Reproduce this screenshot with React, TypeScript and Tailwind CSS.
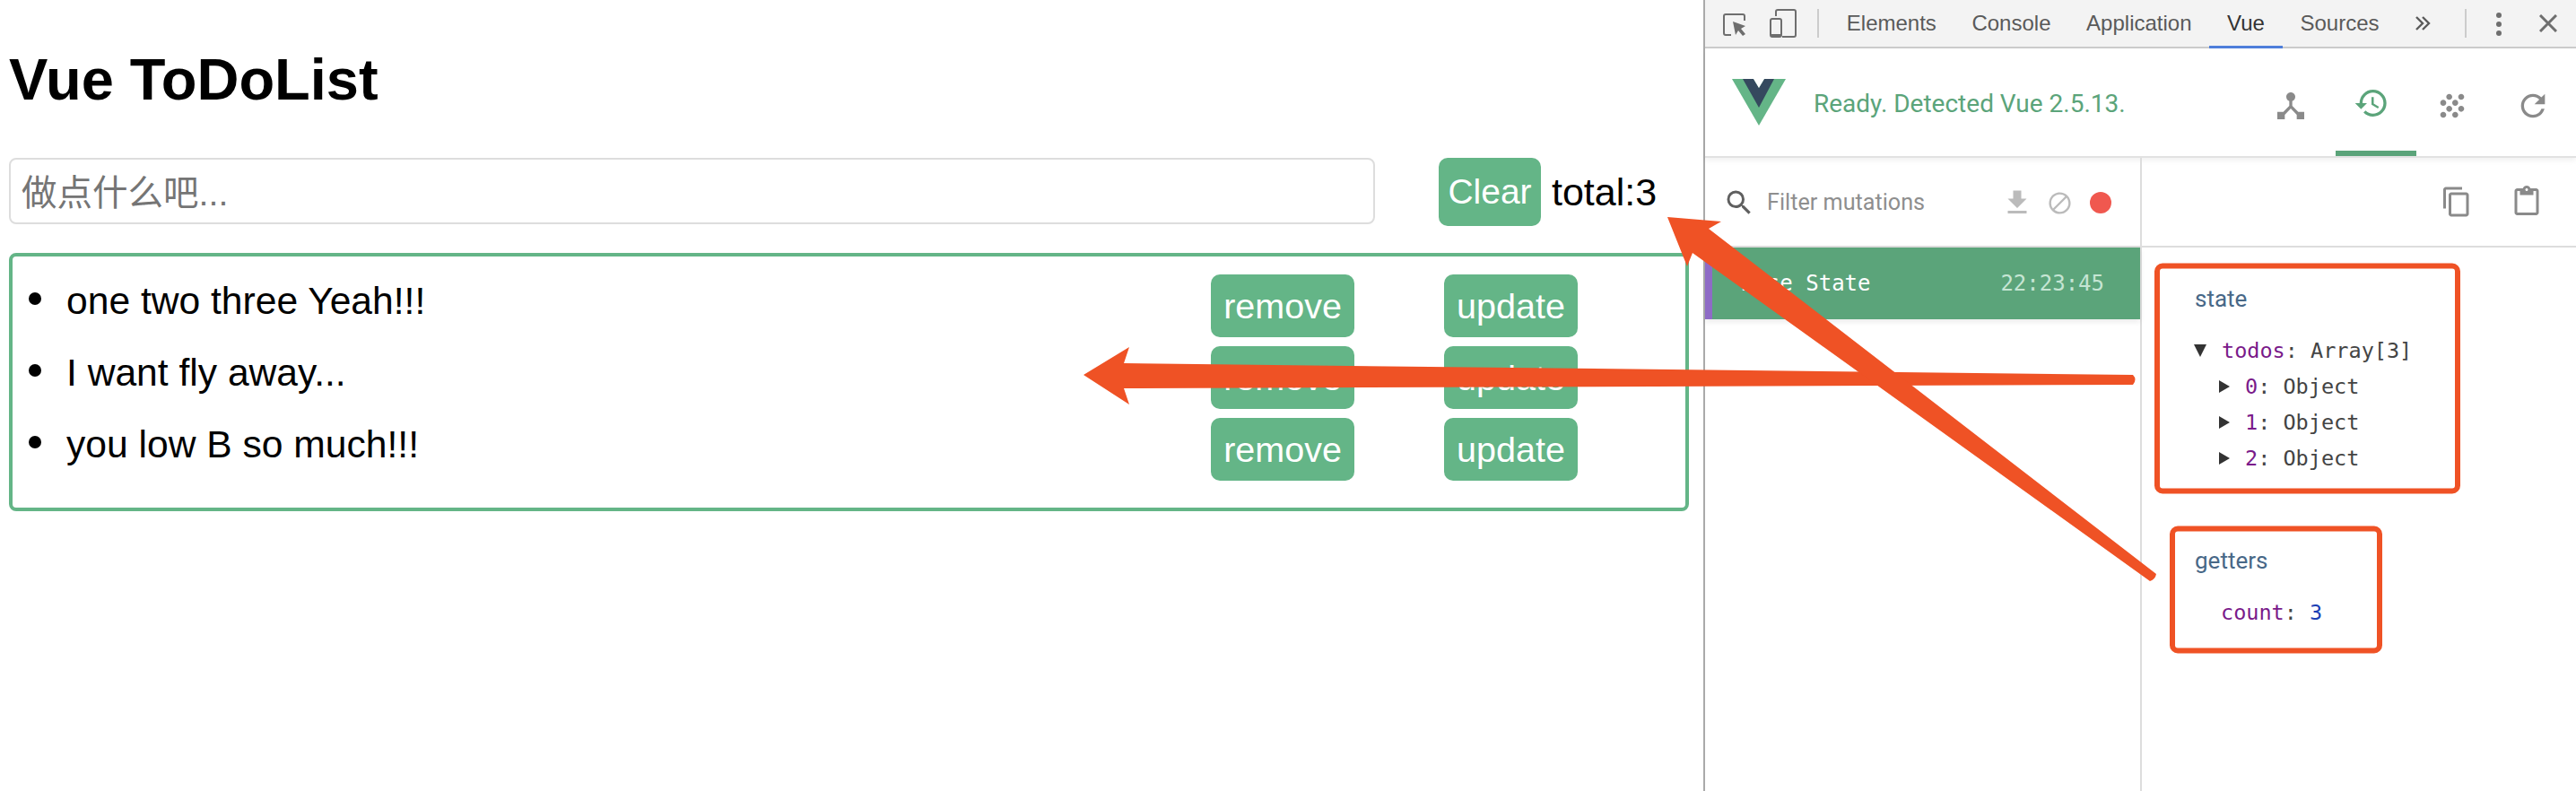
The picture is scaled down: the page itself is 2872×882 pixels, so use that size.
import { MdBlock, MdContentCopy, MdContentPaste, MdDeviceHub, MdFileDownload, MdGrain, MdHistory, MdRefresh, MdSearch } from 'react-icons/md';

const todos = ['one two three Yeah!!!', 'I want fly away...', 'you low B so much!!!'];
const tabs = ['Elements', 'Console', 'Application', 'Vue', 'Sources'];
const sans = 'font-["Liberation_Sans","Noto_Sans_CJK_SC",sans-serif]';

const Button = ({ label, width }: { label: string; width: string }) => (
  <button className={`${width} h-[70px] shrink-0 rounded-[10px] bg-[#64b587] text-[39.5px] leading-[70px] text-white`}>
    {label}
  </button>
);

const TodoApp = () => (
  <div className="w-[1899px] shrink-0 px-[10px] pt-[52px]">
    <h1 className="text-[65px] leading-[74px] font-bold text-black">Vue ToDoList</h1>
    <div className="mt-[50px] flex items-start">
      <input
        className="h-[74px] w-[1523px] rounded-[8px] border-2 border-[#dddddd] pt-[5px] pl-[12px] text-[39.5px] outline-none placeholder:text-[#757575]"
        placeholder="做点什么吧..."
      />
      <button className="ml-[71px] h-[76px] w-[114px] rounded-[10px] bg-[#64b587] text-[39px] leading-[76px] text-white">Clear</button>
      <span className="ml-[12px] text-[43px] leading-[76px] text-black">total:3</span>
    </div>
    <ul className="mt-[30px] flex h-[288px] w-[1873px] flex-col gap-[10px] rounded-[8px] border-4 border-[#64b587] pt-[20px] pl-[18px]">
      {todos.map((todo) => (
        <li key={todo} className="flex h-[70px]">
          <span className="mt-[20px] mr-[28px] h-[14px] w-[14px] shrink-0 rounded-full bg-black" />
          <span className="w-[1276px] shrink-0 text-[42.6px] leading-[59px] text-black">{todo}</span>
          <Button label="remove" width="w-[160px]" />
          <span className="w-[100px] shrink-0" />
          <Button label="update" width="w-[149px]" />
        </li>
      ))}
    </ul>
  </div>
);

const Toolbar = () => (
  <div className="flex h-[54px] shrink-0 items-start border-b-2 border-[#cccccc] bg-[#f3f3f3] text-[24px] text-[#5a5a5a]">
    <svg className="mt-[15px] ml-[20px]" width="26" height="26" viewBox="0 0 26 26">
      <path d="M9 24H3a2 2 0 0 1-2-2V3a2 2 0 0 1 2-2h19a2 2 0 0 1 2 2v5" fill="none" stroke="#6e6e6e" strokeWidth="2" />
      <path d="M11 9l14 5-5 3 5 6-3 2-5-6-3 5z" fill="#6e6e6e" />
    </svg>
    <svg className="mt-[10px] ml-[26px]" width="30" height="32" viewBox="0 0 30 32">
      <path d="M7 8V3a2 2 0 0 1 2-2h18a2 2 0 0 1 2 2v26a2 2 0 0 1-2 2H14" fill="none" stroke="#6e6e6e" strokeWidth="2" />
      <rect x="1" y="11" width="12" height="20" rx="2" fill="none" stroke="#6e6e6e" strokeWidth="2" />
      <rect x="1" y="28" width="12" height="3" fill="#6e6e6e" />
    </svg>
    <span className="mt-[10px] ml-[23px] h-[32px] w-[2px] bg-[#cccccc]" />
    <div className="ml-[11px] flex">
      {tabs.map((tab) => (
        <span
          key={tab}
          className={`h-[54px] border-b-[3px] px-[19.8px] leading-[51px] ${tab === 'Vue' ? 'border-[#4f7fdb] text-[#333333]' : 'border-transparent'}`}
        >
          {tab}
        </span>
      ))}
    </div>
    <svg className="mt-[17px] ml-[20px]" width="18" height="18" viewBox="0 0 18 18">
      <path d="M2 2l7 7-7 7M9 2l7 7-7 7" fill="none" stroke="#5a5a5a" strokeWidth="2.4" />
    </svg>
    <span className="mt-[10px] ml-[38px] h-[32px] w-[2px] bg-[#cccccc]" />
    <div className="mt-[14px] ml-[33px] flex h-[26px] flex-col justify-between">
      <span className="h-[6px] w-[6px] rounded-full bg-[#6e6e6e]" />
      <span className="h-[6px] w-[6px] rounded-full bg-[#6e6e6e]" />
      <span className="h-[6px] w-[6px] rounded-full bg-[#6e6e6e]" />
    </div>
    <svg className="mt-[16px] ml-[42px]" width="20" height="20" viewBox="0 0 20 20">
      <path d="M1 1l18 18M19 1L1 19" stroke="#6e6e6e" strokeWidth="3" />
    </svg>
  </div>
);

const VueHeader = () => (
  <div className="flex h-[122px] shrink-0 items-center border-b-2 border-[#e2e2e2] font-['Roboto',sans-serif] shadow-[0_3px_6px_rgba(0,0,0,0.06)]">
    <svg className="ml-[30px]" width="60" height="52" viewBox="0 0 60 52">
      <path d="M0 0h60L30 52z" fill="#64b587" />
      <path d="M12 0h12l6 10 6-10h11L30 32z" fill="#35495e" />
      <path d="M24 0h12l-6 10z" fill="#ffffff" />
    </svg>
    <span className="mt-[3px] ml-[31px] text-[28px] text-[#5ba47a]">Ready. Detected Vue 2.5.13.</span>
    <div className="ml-auto flex h-full text-[#8a8a8a]">
      <span className="flex w-[90px] items-center justify-center pt-[8px] pr-[10px]"><MdDeviceHub size={40} /></span>
      <span className="flex w-[90px] items-center justify-center border-b-[6px] border-[#5ba47a] pt-[8px] pr-[10px] text-[#5ba47a]"><MdHistory size={40} /></span>
      <span className="flex w-[90px] items-center justify-center pt-[8px] pr-[10px]"><MdGrain size={40} /></span>
      <span className="flex w-[88px] items-center justify-center pt-[8px] pr-[8px]"><MdRefresh size={40} /></span>
    </div>
  </div>
);

const MutationList = () => (
  <div className="flex w-[487px] shrink-0 flex-col border-r-2 border-[#dddddd]">
    <div className="flex h-[100px] shrink-0 items-center border-b-2 border-[#dddddd] pt-[2px] pl-[20px]">
      <MdSearch size={36} className="text-[#5f5f5f]" />
      <span className="ml-[13px] w-[261px] font-['Roboto',sans-serif] text-[25.2px] text-[#8e8e8e]">Filter mutations</span>
      <MdFileDownload size={36} className="text-[#bbbbbb]" />
      <MdBlock size={29} className="ml-[15px] text-[#bbbbbb]" />
      <span className="ml-[19px] h-[24px] w-[24px] rounded-full bg-[#f0584f]" />
    </div>
    <div className="flex h-[80px] shrink-0 items-center justify-between border-l-8 border-[#8e6bc6] bg-[#5ba47a] pr-[40px] pl-[32px] font-['DejaVu_Sans_Mono',monospace] text-[24px] shadow-[0_3px_6px_rgba(0,0,0,0.08)]">
      <span className="font-medium text-white">Base State</span>
      <span className="text-[#c5e5d3]">22:23:45</span>
    </div>
  </div>
);

const Inspector = () => (
  <div className="flex-1">
    <div className="flex h-[100px] items-center border-b-2 border-[#dddddd] pl-[333px] text-[#8a8a8a]">
      <MdContentCopy size={36} />
      <MdContentPaste size={36} className="ml-[42px]" />
    </div>
    <div className="pl-[59px] font-['DejaVu_Sans_Mono',monospace] text-[23.5px] leading-[40px] text-[#444444]">
      <div className="mt-[37px] font-['Roboto',sans-serif] text-[26px] text-[#486887]">state</div>
      <div className="mt-[18px] -ml-[1px] flex items-center">
        <span className="mr-[17px] h-0 w-0 border-x-[7px] border-t-[14px] border-x-transparent border-t-[#333333]" />
        <span className="text-[#7a1a8a]">todos</span>: Array[3]
      </div>
      {['0', '1', '2'].map((index) => (
        <div key={index} className="-ml-[1px] flex items-center pl-[28px]">
          <span className="mr-[17px] h-0 w-0 border-y-[7px] border-l-[12px] border-y-transparent border-l-[#333333]" />
          <span className="text-[#7a1a8a]">{index}</span>: Object
        </div>
      ))}
      <div className="mt-[74px] font-['Roboto',sans-serif] text-[26px] text-[#486887]">getters</div>
      <div className="mt-[18px] pl-[29px]">
        <span className="text-[#7a1a8a]">count</span>: <span className="text-[#1c3fb5]">3</span>
      </div>
    </div>
  </div>
);

// hand-drawn annotations sitting over the screenshot
const Annotations = () => (
  <svg className="pointer-events-none absolute top-0 left-0" width="2872" height="882" viewBox="0 0 2872 882">
    <path
      d="M1208 418L1259 387L1253 405L2378 418Q2383 423 2378 429L1253 433L1259 451Z"
      fill="#ef5225"
    />
    <path
      d="M1859 242L1919 247L1905 255L2404 640Q2403 646 2397 648L1887 282L1881 297Z"
      fill="#ef5225"
    />
    <rect x="2405" y="296.5" width="335" height="251" rx="6" fill="none" stroke="#ef5225" strokeWidth="6" />
    <rect x="2422" y="589.5" width="231" height="136" rx="6" fill="none" stroke="#ef5225" strokeWidth="6" />
  </svg>
);

const App = () => (
  <div className={`relative flex h-[882px] w-[2872px] overflow-hidden bg-white ${sans}`}>
    <TodoApp />
    <div className="flex flex-1 flex-col border-l-2 border-[#aaaaaa]">
      <Toolbar />
      <VueHeader />
      <div className="flex flex-1">
        <MutationList />
        <Inspector />
      </div>
    </div>
    <Annotations />
  </div>
);

export default App;
